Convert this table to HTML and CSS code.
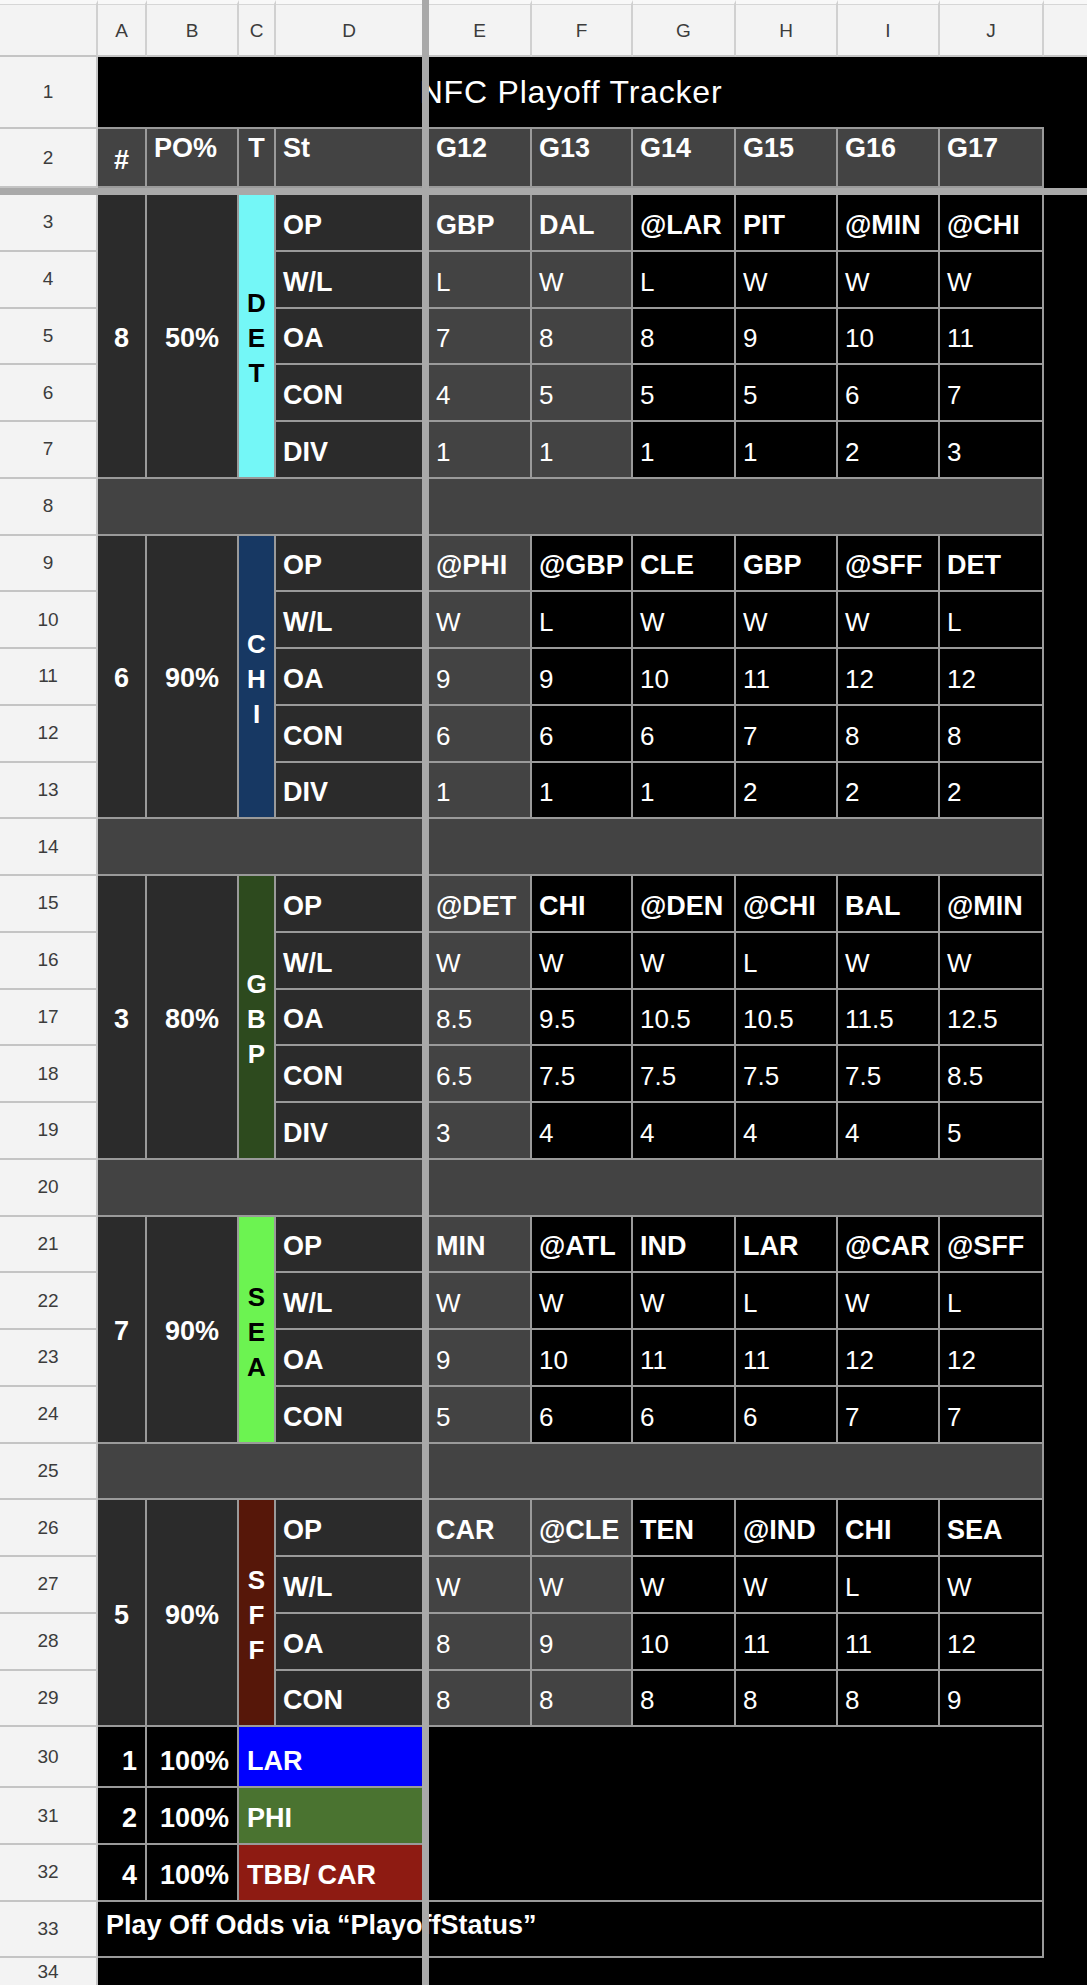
FILE: index.html
```html
<!DOCTYPE html>
<html lang="en">
<head>
<meta charset="utf-8">
<title>NFC Playoff Tracker</title>
<link rel="stylesheet" href="styles.css">
</head>
<body>
<div class="sheet">
  <div class="vbar"></div>
  <div class="hbar"></div>
  <div class="kcol ktop"></div>
  <div class="kcol kbot"></div>
  <div class="title">NFC Playoff Tracker</div>
  <div class="c b note">Play Off Odds via “PlayoffStatus”</div>

  <!-- column headers -->
  <div class="ch"></div>
  <div class="ch">A</div>
  <div class="ch">B</div>
  <div class="ch">C</div>
  <div class="ch edge">D</div>
  <div class="ch">E</div>
  <div class="ch">F</div>
  <div class="ch">G</div>
  <div class="ch">H</div>
  <div class="ch">I</div>
  <div class="ch">J</div>
  <div class="ch edge"></div>

  <div class="rh">1</div>

  <div class="rh">2</div>
  <div class="c b hd hash">#</div>
  <div class="c b hd">PO%</div>
  <div class="c b hd ctr">T</div>
  <div class="c b hd edge">St</div>
  <div class="c b hd">G12</div>
  <div class="c b hd">G13</div>
  <div class="c b hd">G14</div>
  <div class="c b hd">G15</div>
  <div class="c b hd">G16</div>
  <div class="c b hd">G17</div>

  <!-- DET -->
  <div class="rh">3</div>
  <div class="c b dk s5 mid">8</div>
  <div class="c b dk s5 mid">50%</div>
  <div class="c team s5 det"><span>D</span><span>E</span><span>T</span></div>
  <div class="c b dk edge">OP</div>
  <div class="c b g">GBP</div><div class="c b g">DAL</div><div class="c b">@LAR</div><div class="c b">PIT</div><div class="c b">@MIN</div><div class="c b">@CHI</div>
  <div class="rh">4</div>
  <div class="c b dk edge">W/L</div>
  <div class="c g">L</div><div class="c g">W</div><div class="c">L</div><div class="c">W</div><div class="c">W</div><div class="c">W</div>
  <div class="rh">5</div>
  <div class="c b dk edge">OA</div>
  <div class="c g">7</div><div class="c g">8</div><div class="c">8</div><div class="c">9</div><div class="c">10</div><div class="c">11</div>
  <div class="rh">6</div>
  <div class="c b dk edge">CON</div>
  <div class="c g">4</div><div class="c g">5</div><div class="c">5</div><div class="c">5</div><div class="c">6</div><div class="c">7</div>
  <div class="rh">7</div>
  <div class="c b dk edge">DIV</div>
  <div class="c g">1</div><div class="c g">1</div><div class="c">1</div><div class="c">1</div><div class="c">2</div><div class="c">3</div>

  <div class="rh">8</div>
  <div class="c sepl"></div>
  <div class="c sepr"></div>

  <!-- CHI -->
  <div class="rh">9</div>
  <div class="c b dk s5 mid">6</div>
  <div class="c b dk s5 mid">90%</div>
  <div class="c team s5 chi"><span>C</span><span>H</span><span>I</span></div>
  <div class="c b dk edge">OP</div>
  <div class="c b g">@PHI</div><div class="c b">@GBP</div><div class="c b">CLE</div><div class="c b">GBP</div><div class="c b">@SFF</div><div class="c b">DET</div>
  <div class="rh">10</div>
  <div class="c b dk edge">W/L</div>
  <div class="c g">W</div><div class="c">L</div><div class="c">W</div><div class="c">W</div><div class="c">W</div><div class="c">L</div>
  <div class="rh">11</div>
  <div class="c b dk edge">OA</div>
  <div class="c g">9</div><div class="c">9</div><div class="c">10</div><div class="c">11</div><div class="c">12</div><div class="c">12</div>
  <div class="rh">12</div>
  <div class="c b dk edge">CON</div>
  <div class="c g">6</div><div class="c">6</div><div class="c">6</div><div class="c">7</div><div class="c">8</div><div class="c">8</div>
  <div class="rh">13</div>
  <div class="c b dk edge">DIV</div>
  <div class="c g">1</div><div class="c">1</div><div class="c">1</div><div class="c">2</div><div class="c">2</div><div class="c">2</div>

  <div class="rh">14</div>
  <div class="c sepl"></div>
  <div class="c sepr"></div>

  <!-- GBP -->
  <div class="rh">15</div>
  <div class="c b dk s5 mid">3</div>
  <div class="c b dk s5 mid">80%</div>
  <div class="c team s5 gbp"><span>G</span><span>B</span><span>P</span></div>
  <div class="c b dk edge">OP</div>
  <div class="c b g">@DET</div><div class="c b">CHI</div><div class="c b">@DEN</div><div class="c b">@CHI</div><div class="c b">BAL</div><div class="c b">@MIN</div>
  <div class="rh">16</div>
  <div class="c b dk edge">W/L</div>
  <div class="c g">W</div><div class="c">W</div><div class="c">W</div><div class="c">L</div><div class="c">W</div><div class="c">W</div>
  <div class="rh">17</div>
  <div class="c b dk edge">OA</div>
  <div class="c g">8.5</div><div class="c">9.5</div><div class="c">10.5</div><div class="c">10.5</div><div class="c">11.5</div><div class="c">12.5</div>
  <div class="rh">18</div>
  <div class="c b dk edge">CON</div>
  <div class="c g">6.5</div><div class="c">7.5</div><div class="c">7.5</div><div class="c">7.5</div><div class="c">7.5</div><div class="c">8.5</div>
  <div class="rh">19</div>
  <div class="c b dk edge">DIV</div>
  <div class="c g">3</div><div class="c">4</div><div class="c">4</div><div class="c">4</div><div class="c">4</div><div class="c">5</div>

  <div class="rh">20</div>
  <div class="c sepl"></div>
  <div class="c sepr"></div>

  <!-- SEA -->
  <div class="rh">21</div>
  <div class="c b dk s4 mid">7</div>
  <div class="c b dk s4 mid">90%</div>
  <div class="c team s4 sea"><span>S</span><span>E</span><span>A</span></div>
  <div class="c b dk edge">OP</div>
  <div class="c b g">MIN</div><div class="c b">@ATL</div><div class="c b">IND</div><div class="c b">LAR</div><div class="c b">@CAR</div><div class="c b">@SFF</div>
  <div class="rh">22</div>
  <div class="c b dk edge">W/L</div>
  <div class="c g">W</div><div class="c">W</div><div class="c">W</div><div class="c">L</div><div class="c">W</div><div class="c">L</div>
  <div class="rh">23</div>
  <div class="c b dk edge">OA</div>
  <div class="c g">9</div><div class="c">10</div><div class="c">11</div><div class="c">11</div><div class="c">12</div><div class="c">12</div>
  <div class="rh">24</div>
  <div class="c b dk edge">CON</div>
  <div class="c g">5</div><div class="c">6</div><div class="c">6</div><div class="c">6</div><div class="c">7</div><div class="c">7</div>

  <div class="rh">25</div>
  <div class="c sepl"></div>
  <div class="c sepr"></div>

  <!-- SFF -->
  <div class="rh">26</div>
  <div class="c b dk s4 mid">5</div>
  <div class="c b dk s4 mid">90%</div>
  <div class="c team s4 sff"><span>S</span><span>F</span><span>F</span></div>
  <div class="c b dk edge">OP</div>
  <div class="c b g">CAR</div><div class="c b g">@CLE</div><div class="c b">TEN</div><div class="c b">@IND</div><div class="c b">CHI</div><div class="c b">SEA</div>
  <div class="rh">27</div>
  <div class="c b dk edge">W/L</div>
  <div class="c g">W</div><div class="c g">W</div><div class="c">W</div><div class="c">W</div><div class="c">L</div><div class="c">W</div>
  <div class="rh">28</div>
  <div class="c b dk edge">OA</div>
  <div class="c g">8</div><div class="c g">9</div><div class="c">10</div><div class="c">11</div><div class="c">11</div><div class="c">12</div>
  <div class="rh">29</div>
  <div class="c b dk edge">CON</div>
  <div class="c g">8</div><div class="c g">8</div><div class="c">8</div><div class="c">8</div><div class="c">8</div><div class="c">9</div>

  <!-- seeds -->
  <div class="rh">30</div>
  <div class="c b r">1</div>
  <div class="c b r">100%</div>
  <div class="c b cd lar edge">LAR</div>
  <div class="c ej"></div>
  <div class="rh">31</div>
  <div class="c b r">2</div>
  <div class="c b r">100%</div>
  <div class="c b cd phi edge">PHI</div>
  <div class="rh">32</div>
  <div class="c b r">4</div>
  <div class="c b r">100%</div>
  <div class="c b cd tbb edge">TBB/ CAR</div>

  <div class="rh">33</div>
  <div class="rh last">34</div>
</div>
</body>
</html>
```

FILE: styles.css
```css
* {
  box-sizing: border-box;
}

html, body {
  margin: 0;
  padding: 0;
  background: #000;
}

.sheet {
  display: grid;
  width: 1087px;
  height: 1985px;
  overflow: hidden;
  background: #000;
  grid-template-columns: 98px 49px 92px 37px 146px 7px 103px 101px 103px 102px 102px 104px 43px;
  grid-template-rows: 57px 72px 59px 7px repeat(27, 56.75px) 61px repeat(3, 56.7px) 1fr;
  font-family: "Liberation Sans", Arial, Helvetica, sans-serif;
}

/* frozen pane dividers */
.vbar {
  grid-column: 6;
  grid-row: 1 / -1;
  background: #a9a9a9;
  z-index: 2;
}

.hbar {
  grid-column: 1 / -1;
  grid-row: 4;
  background: #a9a9a9;
  z-index: 2;
}

.kcol {
  grid-column: 13;
  background: #000;
}

.ktop {
  grid-row: 2 / 4;
}

.kbot {
  grid-row: 5 / -1;
}

/* column and row headers */
.ch {
  display: flex;
  align-items: center;
  justify-content: center;
  padding-top: 2px;
  background: #f3f3f3;
  color: #3c3c3c;
  font-size: 19px;
  border-top: 4px solid #f8f8f8;
  border-right: 2px solid #d0d0d0;
  border-bottom: 2px solid #c4c4c4;
  box-shadow: inset 0 1px 0 #d6d6d6;
}

.ch.edge {
  border-right: 0;
}

.rh {
  display: flex;
  align-items: center;
  justify-content: center;
  background: #f3f3f3;
  color: #3c3c3c;
  font-size: 19px;
  border-right: 2px solid #c4c4c4;
  border-bottom: 2px solid #c4c4c4;
}

.rh.last {
  align-items: flex-start;
  padding-top: 3px;
  border-bottom: 0;
  line-height: 22px;
}

/* title row */
.title {
  grid-column: 2 / 13;
  grid-row: 2;
  display: flex;
  align-items: center;
  justify-content: center;
  padding-top: 1px;
  color: #fff;
  font-size: 32px;
  letter-spacing: 0.8px;
  border-bottom: 2px solid #9a9a9a;
  white-space: nowrap;
}

/* generic cell */
.c {
  display: flex;
  align-items: flex-end;
  padding: 0 2px 10px 7px;
  background: #000;
  color: #fff;
  font-size: 26px;
  line-height: 30px;
  white-space: nowrap;
  border-right: 2px solid #9a9a9a;
  border-bottom: 2px solid #9a9a9a;
}

.b {
  font-weight: 700;
  font-size: 27px;
}

.dk {
  background: #2b2b2b;
}

.g {
  background: #434343;
}

.edge {
  border-right: 0;
}

.hd {
  align-items: flex-start;
  padding-top: 4px;
  padding-bottom: 0;
  background: #434343;
}

.hd.hash {
  align-items: center;
  justify-content: center;
  padding: 5px 0 0;
}

.hd.ctr {
  justify-content: center;
  padding-left: 0;
  padding-right: 0;
}

.s5 {
  grid-row: span 5;
}

.s4 {
  grid-row: span 4;
}

.mid {
  align-items: center;
  justify-content: center;
  padding: 4px 0 0;
}

/* vertical team label */
.team {
  flex-direction: column;
  align-items: center;
  justify-content: center;
  padding: 6px 0 0;
  font-weight: 700;
  font-size: 26px;
  line-height: 35px;
}

.team span {
  display: block;
}

.det {
  background: #74f7f7;
  color: #000;
}

.chi {
  background: #173863;
  color: #fff;
}

.gbp {
  background: #2d4a1e;
  color: #fff;
}

.sea {
  background: #6cf351;
  color: #000;
}

.sff {
  background: #561709;
  color: #fff;
}

/* separator rows */
.sepl {
  grid-column: span 4;
  background: #434343;
  border-right: 0;
}

.sepr {
  grid-column: span 6;
  background: #434343;
}

/* seed rows */
.r {
  justify-content: flex-end;
  padding-right: 8px;
  padding-left: 0;
}

.cd {
  grid-column: span 2;
  padding-left: 8px;
}

.lar {
  background: #0000ff;
}

.phi {
  background: #4a7330;
}

.tbb {
  background: #8e1b12;
}

.ej {
  grid-column: span 6;
  grid-row: span 3;
}

.note {
  grid-column: 2 / 13;
  grid-row: 35;
  align-items: flex-start;
  padding-top: 8px;
  padding-left: 8px;
}
```
